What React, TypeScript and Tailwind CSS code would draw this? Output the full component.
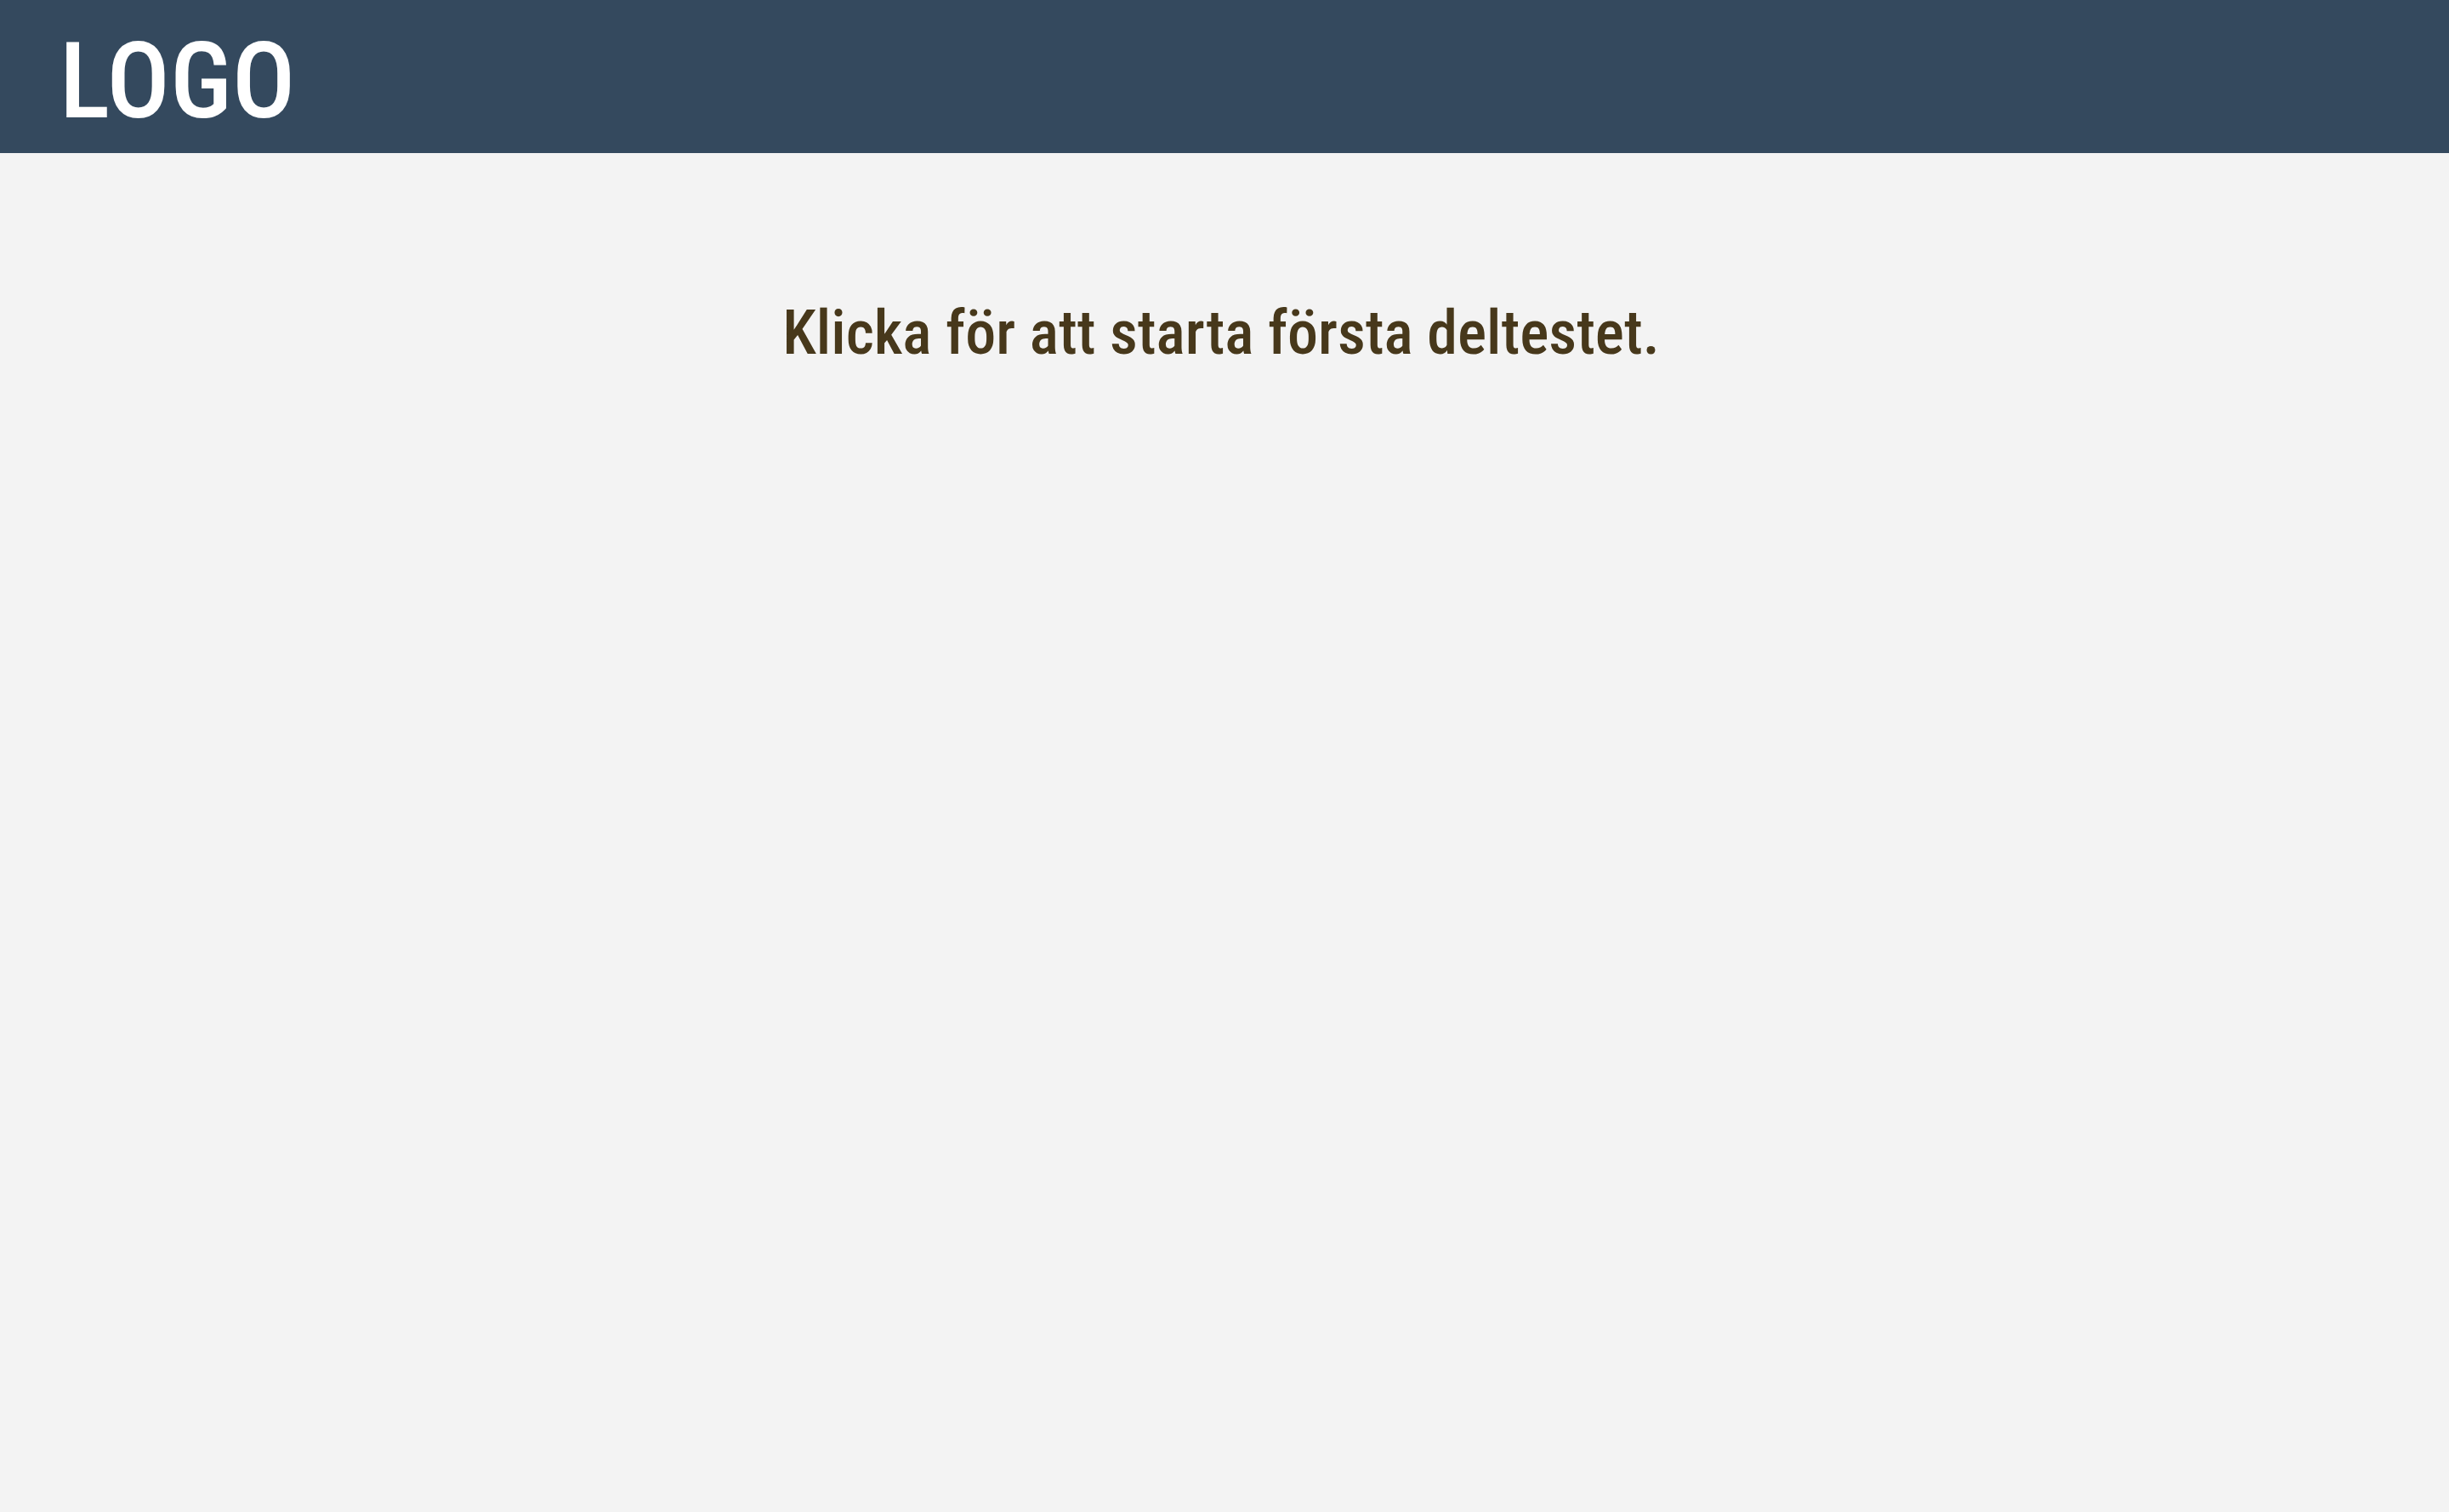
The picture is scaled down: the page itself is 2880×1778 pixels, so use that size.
export default function App() {
  return (
    <div className="min-h-screen bg-[#f3f3f3] font-['Roboto_Condensed','Roboto',sans-serif] font-medium">
      <header className="flex bg-[#34495e] px-[70px] pt-4 pb-1">
        <a href="#" className="text-[124px] leading-[160px] text-white">
          LOGO
        </a>
      </header>
      <main className="flex justify-center pt-[170px] pr-2">
        <button type="button" className="cursor-pointer text-[72px] leading-[84px] text-[#47381b]">
          Klicka för att starta första deltestet.
        </button>
      </main>
    </div>
  );
}
